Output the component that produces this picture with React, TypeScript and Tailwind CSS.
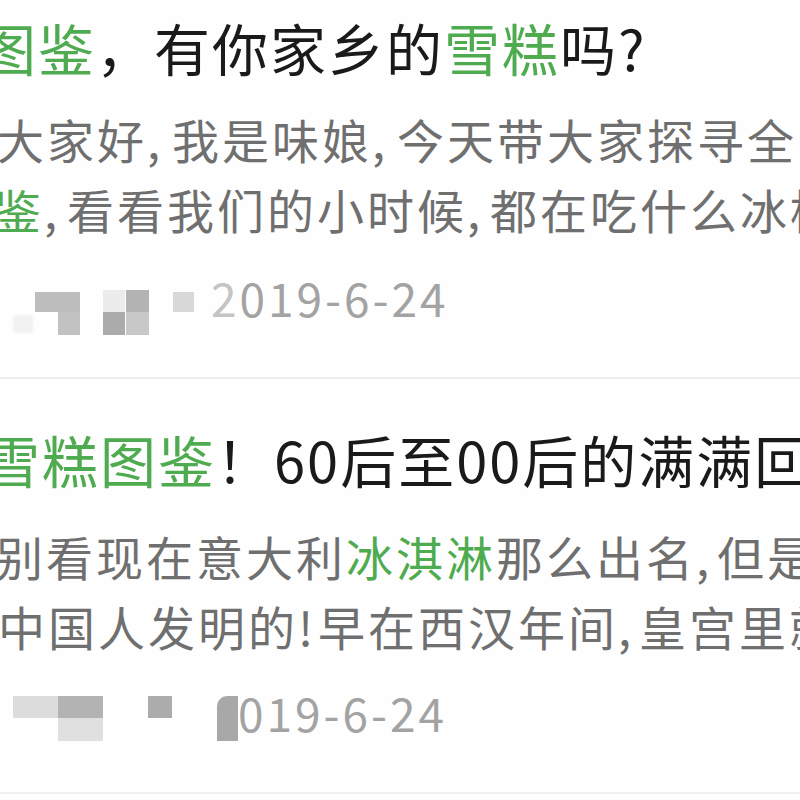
import React from "react";

const G = "text-[#4fab4f]";

function Cm({ ch = ",", w = "w-[23px]" }: { ch?: string; w?: string }) {
  return <span className={`inline-block ${w}`}>{ch}</span>;
}

function Cell({ c, w, h }: { c: string; w: string; h: string }) {
  return <div className={`${w} ${h} ${c}`} />;
}

export default function App() {
  return (
    <div className="w-[800px] h-[800px] overflow-hidden bg-[#fefefe] font-['Noto_Sans_CJK_SC','Noto_Sans',sans-serif]">
      {/* Section 1 */}
      <div className="pt-[12px] pb-[50px] border-b-2 border-[#eeeeee]">
        <div className="whitespace-nowrap ml-[-20px] text-[56px] leading-[70px] tracking-[2px] text-[#1a1a1a]">
          <span className={G}>图鉴</span>，有你家乡的<span className={G}>雪糕</span>吗?
        </div>
        <div className="mt-[22px] text-[47px] leading-[70px] tracking-[3px] text-[#6f6f6f] whitespace-nowrap">
          <div className="ml-[-3px]">
            大家好<Cm w="w-[25px]" />我是味娘<Cm w="w-[25px]" />今天带大家探寻全国雪糕
          </div>
          <div className="ml-[-6px]">
            <span className={G}>鉴</span>
            <Cm />看看我们的小时候<Cm />都在吃什么冰棍
          </div>
        </div>
        <div className="mt-[23px] h-[60px] flex items-start whitespace-nowrap">
          <div className="ml-[13px] mt-[48px] w-[20px] h-[18px] bg-[#f2f2f2] blur-[1px]" />
          <div className="ml-[2px] mt-[25px] flex flex-col items-end">
            <Cell c="bg-[#bdbdbd]" w="w-[45px]" h="h-[20px]" />
            <Cell c="bg-[#c2c2c2]" w="w-[22px]" h="h-[23px]" />
          </div>
          <div className="ml-[23px] mt-[23px] grid grid-cols-2">
            <Cell c="bg-[#ececec]" w="w-[22px]" h="h-[22px]" />
            <Cell c="bg-[#b3b3b3]" w="w-[23px]" h="h-[22px]" />
            <Cell c="bg-[#ababab]" w="w-[22px]" h="h-[23px]" />
            <Cell c="bg-[#c8c8c8]" w="w-[23px]" h="h-[23px]" />
          </div>
          <div className="ml-[24px] mt-[25px] w-[21px] h-[20px] bg-[#d8d8d8]" />
          <div className="ml-[17px] text-[46px] leading-[60px] tracking-[3px] text-[#a3a3a3]">
            <span className="text-[#c4c4c4]">2</span>019-6-24
          </div>
        </div>
      </div>

      {/* Section 2 */}
      <div className="pt-[45px] pb-[50px] border-b-2 border-[#f1eff3]">
        <div className="whitespace-nowrap ml-[-16px] text-[56px] leading-[70px] tracking-[2px] text-[#1a1a1a]">
          <span className={G}>雪糕图鉴</span>！60后至00后的满满回忆
        </div>
        <div className="mt-[27px] text-[47px] leading-[70px] tracking-[3px] text-[#6f6f6f] whitespace-nowrap">
          <div className="ml-[-4px]">
            别看现在意大利<span className={G}>冰淇淋</span>那么出名<Cm w="w-[21px]" />但是
          </div>
          <div className="ml-[-2px]">
            中国人发明的<Cm ch="!" w="w-[20px]" />早在西汉年间<Cm w="w-[21px]" />皇宫里就
          </div>
        </div>
        <div className="mt-[21px] h-[60px] flex items-start whitespace-nowrap">
          <div className="ml-[13px] mt-[14px] flex flex-col items-end">
            <div className="flex">
              <Cell c="bg-[#dcdcdc]" w="w-[45px]" h="h-[22px]" />
              <Cell c="bg-[#b3b3b3]" w="w-[45px]" h="h-[22px]" />
            </div>
            <Cell c="bg-[#e0e0e0]" w="w-[45px]" h="h-[23px]" />
          </div>
          <div className="ml-[45px] mt-[14px] w-[24px] h-[22px] bg-[#acacac]" />
          <div className="ml-[45px] mt-[14px] w-[21px] h-[45px] bg-[#a8a8a8] rounded-tl-[10px]" />
          <div className="text-[46px] leading-[60px] tracking-[3px] text-[#a3a3a3]">019-6-24</div>
        </div>
      </div>
    </div>
  );
}
